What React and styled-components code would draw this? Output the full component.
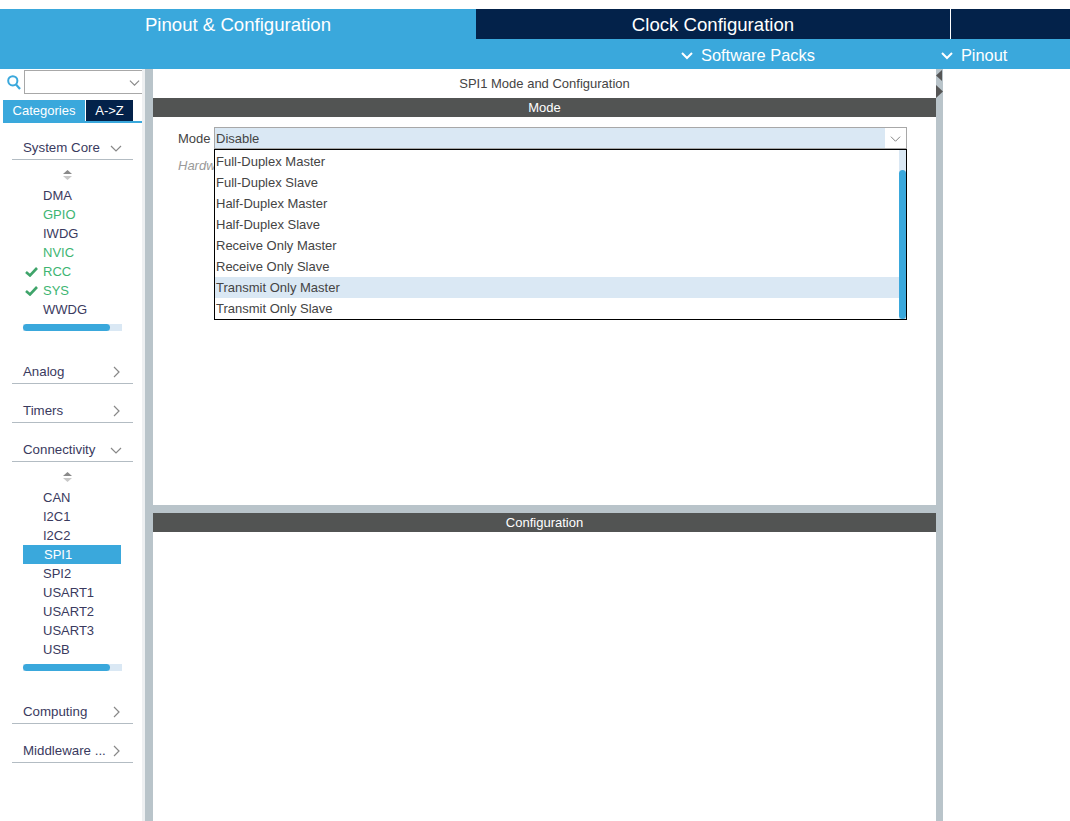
import React from "react";
import styled, { createGlobalStyle } from "styled-components";

const Global = createGlobalStyle`
  html, body { margin: 0; padding: 0; background: #fff; }
  body { font-family: "Liberation Sans", Arial, sans-serif; }
  * { box-sizing: border-box; }
`;

const C = {
  blue: "#3aa8dc",
  navy: "#03224a",
  dark: "#525453",
  split: "#b9c4ca",
  text: "#3a3a5e",
  green: "#3db572",
  light: "#dae8f4",
};

const Page = styled.div`
  width: 1070px;
  height: 821px;
  display: flex;
  flex-direction: column;
  overflow: hidden;
  padding-top: 9px;
`;

const Header = styled.div`
  background: ${C.blue};
  height: 60px;
  display: flex;
  flex-direction: column;
`;

const TabRow = styled.div`
  display: flex;
  height: 30px;
`;

const TopTab = styled.div`
  width: ${(p) => p.$w || "auto"};
  flex: ${(p) => (p.$grow ? 1 : "none")};
  background: ${(p) => (p.$active ? C.blue : C.navy)};
  border-right: ${(p) => (p.$sep ? "1px solid #fff" : "none")};
  color: #fff;
  font-size: 18.6px;
  display: flex;
  align-items: center;
  justify-content: center;
  padding-top: 2px;
`;

const SubRow = styled.div`
  display: flex;
  height: 30px;
  align-items: center;
  color: #fff;
  font-size: 16.4px;
  padding-top: 2px;
`;

const SubItem = styled.div`
  display: flex;
  align-items: center;
  gap: 8px;
  margin-left: ${(p) => p.$ml};
`;

const Body = styled.div`
  flex: 1;
  display: flex;
  min-height: 0;
`;

const Sidebar = styled.div`
  width: 145px;
  background: #fff;
  border-right: 3px solid #eef0f2;
  display: flex;
  flex-direction: column;
`;

const Splitter = styled.div`
  width: ${(p) => p.$w}px;
  height: ${(p) => (p.$h ? `${p.$h}px` : "auto")};
  background: ${C.split};
  flex: none;
  position: relative;
`;

const SearchRow = styled.div`
  display: flex;
  align-items: center;
  height: 26px;
  padding-left: 7px;
  gap: 3px;
`;

const SearchBox = styled.div`
  flex: 1;
  height: 24px;
  border: 1px solid #a8a8a8;
  border-right: none;
  display: flex;
  align-items: center;
  justify-content: flex-end;
  padding-right: 2px;
`;

const SideTabs = styled.div`
  margin: 5px 0 0 3px;
  display: flex;
  border-bottom: 2px solid ${C.blue};
  width: 139px;
`;

const SideTab = styled.div`
  width: ${(p) => p.$w}px;
  height: 21px;
  background: ${(p) => (p.$active ? C.blue : C.navy)};
  color: #fff;
  font-size: 13px;
  display: flex;
  align-items: center;
  justify-content: center;
  margin-right: 1px;
`;

const CatList = styled.div`
  padding: 0 0 0 12px;
  width: 133px;
  margin-top: 13px;
`;

const CatHeader = styled.div`
  height: 24px;
  border-bottom: 1px solid #b3bcc3;
  display: flex;
  align-items: center;
  justify-content: space-between;
  padding: 0 11px 0 11px;
  margin-top: ${(p) => (p.$first ? 0 : 15)}px;
  color: ${C.text};
  font-size: 13.3px;
`;

const Expanded = styled.div`
  padding-left: 11px;
  padding-bottom: 14px;
`;

const ScrollArrows = styled.div`
  height: 26px;
  display: flex;
  justify-content: center;
  align-items: center;
  padding-right: 22px;
  padding-top: 5px;
`;

const Item = styled.div`
  height: 19px;
  width: 98px;
  display: flex;
  align-items: center;
  position: relative;
  padding-left: ${(p) => (p.$sel ? 21 : 20)}px;
  font-size: 13px;
  background: ${(p) => (p.$sel ? C.blue : "transparent")};
  color: ${(p) => (p.$sel ? "#fff" : p.$green ? C.green : C.text)};
`;

const Check = styled.svg`
  position: absolute;
  left: 2px;
  top: 5px;
`;

const HScroll = styled.div`
  margin-top: 5px;
  width: 99px;
  height: 7px;
  background: ${C.light};
  position: relative;
`;

const HThumb = styled.div`
  height: 7px;
  width: 87px;
  border-radius: 4px;
  background: ${C.blue};
`;

const Main = styled.div`
  width: 783px;
  flex: none;
  display: flex;
  flex-direction: column;
  background: #fff;
`;

const Title = styled.div`
  height: 29px;
  display: flex;
  align-items: center;
  justify-content: center;
  color: #444;
  font-size: 13px;
  padding-bottom: 1px;
`;

const Bar = styled.div`
  height: ${(p) => p.$h}px;
  background: ${C.dark};
  color: #fff;
  font-size: 13px;
  display: flex;
  align-items: center;
  justify-content: center;
`;

const ModeArea = styled.div`
  height: 388px;
  padding: 10px 0 0 25px;
  position: relative;
`;

const FieldRow = styled.div`
  display: flex;
  align-items: center;
  height: 22px;
`;

const Label = styled.div`
  width: 36px;
  overflow: hidden;
  white-space: nowrap;
  color: ${(p) => (p.$muted ? "#9a9a9a" : "#444")};
  font-style: ${(p) => (p.$muted ? "italic" : "normal")};
  font-size: 13px;
`;

const Select = styled.div`
  width: 693px;
  height: 22px;
  border: 1px solid #a8a8a8;
  display: flex;
  position: relative;
`;

const SelectValue = styled.div`
  flex: 1;
  background: ${C.light};
  color: #444;
  font-size: 13px;
  display: flex;
  align-items: center;
  padding-left: 1px;
`;

const SelectBtn = styled.div`
  width: 21px;
  background: #fff;
  display: flex;
  align-items: center;
  justify-content: center;
`;

const Dropdown = styled.div`
  position: absolute;
  top: 21px;
  left: -1px;
  width: 693px;
  height: 171px;
  border: 1px solid #000;
  background: #fff;
  z-index: 5;
  display: flex;
`;

const Options = styled.div`
  flex: 1;
  display: flex;
  flex-direction: column;
  padding-top: 1px;
`;

const Option = styled.div`
  height: 21px;
  display: flex;
  align-items: center;
  padding-left: 1px;
  font-size: 13px;
  color: #444;
  background: ${(p) => (p.$hl ? C.light : "transparent")};
`;

const VScroll = styled.div`
  width: 7px;
  background: ${C.light};
  display: flex;
  flex-direction: column;
  justify-content: flex-end;
`;

const VThumb = styled.div`
  height: 149px;
  background: ${C.blue};
  border-radius: 4px;
`;

const HiddenRow = styled.div`
  display: flex;
  align-items: center;
  height: 17px;
  margin-top: 8px;
`;

const RightPanel = styled.div`
  flex: 1;
  background: #fff;
`;

const Arrow = styled.svg`
  position: absolute;
  left: 0;
  top: ${(p) => p.$top}px;
`;

const Chevron = ({ dir = "down", color = "#888", size = 12, sw = 1.2 }) => (
  <svg width={size} height={size} viewBox="0 0 12 12">
    {dir === "down" ? (
      <polyline points="1,4 6,9 11,4" fill="none" stroke={color} strokeWidth={sw} />
    ) : (
      <polyline points="4,1 9,6 4,11" fill="none" stroke={color} strokeWidth={sw} />
    )}
  </svg>
);

const UpDown = () => (
  <svg width="9" height="11" viewBox="0 0 9 11">
    <polygon points="0,4 4.5,0 9,4" fill="#8a8a8a" />
    <polygon points="0,6 4.5,10 9,6" fill="#c8c8c8" />
  </svg>
);

const CheckIcon = () => (
  <Check width="13" height="10" viewBox="0 0 13 10">
    <polyline points="1,5 5,8.5 12,1" fill="none" stroke="#3fa46a" strokeWidth="2.6" />
  </Check>
);

const systemCore = [
  { n: "DMA" },
  { n: "GPIO", g: true },
  { n: "IWDG" },
  { n: "NVIC", g: true },
  { n: "RCC", g: true, c: true },
  { n: "SYS", g: true, c: true },
  { n: "WWDG" },
];

const connectivity = ["CAN", "I2C1", "I2C2", "SPI1", "SPI2", "USART1", "USART2", "USART3", "USB"];

const options = [
  "Full-Duplex Master",
  "Full-Duplex Slave",
  "Half-Duplex Master",
  "Half-Duplex Slave",
  "Receive Only Master",
  "Receive Only Slave",
  "Transmit Only Master",
  "Transmit Only Slave",
];

export default function App() {
  return (
    <Page>
      <Global />
      <Header>
        <TabRow>
          <TopTab $w="476px" $active>Pinout &amp; Configuration</TopTab>
          <TopTab $w="475px" $sep>Clock Configuration</TopTab>
          <TopTab $grow />
        </TabRow>
        <SubRow>
          <SubItem $ml="681px">
            <Chevron color="#fff" size={12} sw={2} />
            Software Packs
          </SubItem>
          <SubItem $ml="126px">
            <Chevron color="#fff" size={12} sw={2} />
            Pinout
          </SubItem>
        </SubRow>
      </Header>
      <Body>
        <Sidebar>
          <SearchRow>
            <svg width="14" height="15" viewBox="0 0 14 15">
              <circle cx="5.8" cy="5.8" r="4.6" fill="none" stroke={C.blue} strokeWidth="2" />
              <line x1="9" y1="9.5" x2="13" y2="14" stroke={C.blue} strokeWidth="2.2" />
            </svg>
            <SearchBox>
              <Chevron color="#888" size={11} />
            </SearchBox>
          </SearchRow>
          <SideTabs>
            <SideTab $w={82} $active>Categories</SideTab>
            <SideTab $w={47}>A-&gt;Z</SideTab>
          </SideTabs>
          <CatList>
            <CatHeader $first>
              System Core <Chevron />
            </CatHeader>
            <Expanded>
              <ScrollArrows><UpDown /></ScrollArrows>
              {systemCore.map((it) => (
                <Item key={it.n} $green={it.g}>
                  {it.c && <CheckIcon />}
                  {it.n}
                </Item>
              ))}
              <HScroll><HThumb /></HScroll>
            </Expanded>
            <CatHeader>
              Analog <Chevron dir="right" />
            </CatHeader>
            <CatHeader>
              Timers <Chevron dir="right" />
            </CatHeader>
            <CatHeader>
              Connectivity <Chevron />
            </CatHeader>
            <Expanded>
              <ScrollArrows><UpDown /></ScrollArrows>
              {connectivity.map((n) => (
                <Item key={n} $sel={n === "SPI1"}>{n}</Item>
              ))}
              <HScroll><HThumb /></HScroll>
            </Expanded>
            <CatHeader>
              Computing <Chevron dir="right" />
            </CatHeader>
            <CatHeader>
              Middleware ... <Chevron dir="right" />
            </CatHeader>
          </CatList>
        </Sidebar>
        <Splitter $w={8} />
        <Main>
          <Title>SPI1 Mode and Configuration</Title>
          <Bar $h={19}>Mode</Bar>
          <ModeArea>
            <FieldRow>
              <Label>Mode</Label>
              <Select>
                <SelectValue>Disable</SelectValue>
                <SelectBtn><Chevron color="#777" size={11} sw={1} /></SelectBtn>
                <Dropdown>
                  <Options>
                    {options.map((o) => (
                      <Option key={o} $hl={o === "Transmit Only Master"}>{o}</Option>
                    ))}
                  </Options>
                  <VScroll><VThumb /></VScroll>
                </Dropdown>
              </Select>
            </FieldRow>
            <HiddenRow>
              <Label $muted>Hardware NSS Signal</Label>
            </HiddenRow>
          </ModeArea>
          <Splitter $w={783} $h={8} />
          <Bar $h={19}>Configuration</Bar>
        </Main>
        <Splitter $w={7}>
          <Arrow $top={1} width="7" height="11" viewBox="0 0 7 11">
            <polygon points="6,0 0,5.5 6,11" fill="#555" />
          </Arrow>
          <Arrow $top={16} width="7" height="13" viewBox="0 0 7 13">
            <polygon points="0,0 7,6.5 0,13" fill="#555" />
          </Arrow>
        </Splitter>
        <RightPanel />
      </Body>
    </Page>
  );
}
